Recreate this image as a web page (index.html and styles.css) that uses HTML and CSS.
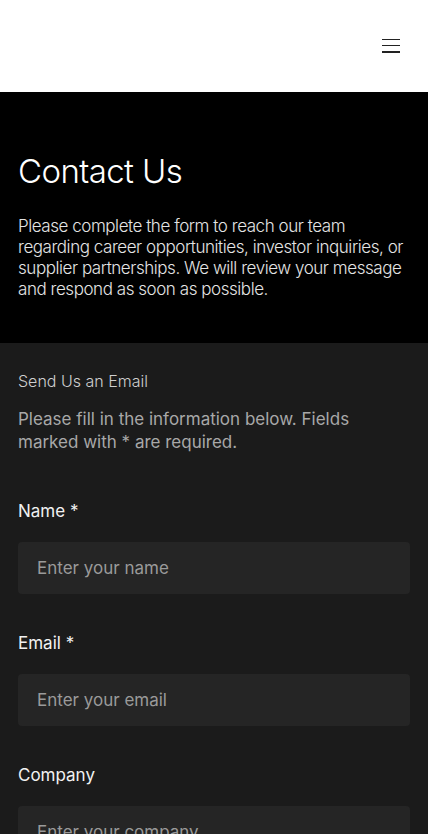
FILE: index.html
```html
<!DOCTYPE html>
<html lang="en">
<head>
    <meta charset="UTF-8">
    <meta name="viewport" content="width=device-width, initial-scale=1.0">
    <title>Contact Us</title>
    <link rel="stylesheet" href="styles.css">
</head>
<body>

    <div class="topbar">
        <button class="menu-btn" aria-label="Menu">
            <span></span>
            <span></span>
            <span></span>
        </button>
    </div>

    <div class="hero">
        <h1>Contact Us</h1>
        <p>Please complete the form to reach our team regarding career opportunities, investor inquiries, or supplier partnerships. We will review your message and respond as soon as possible.</p>
    </div>

    <div class="form-section">
        <h2>Send Us an Email</h2>
        <p class="intro">Please fill in the information below. Fields marked with * are required.</p>

        <form class="contact-form">
            <div class="field">
                <label for="name">Name *</label>
                <input type="text" id="name" placeholder="Enter your name">
            </div>
            <div class="field">
                <label for="email">Email *</label>
                <input type="email" id="email" placeholder="Enter your email">
            </div>
            <div class="field">
                <label for="company">Company</label>
                <input type="text" id="company" placeholder="Enter your company">
            </div>
        </form>
    </div>

</body>
</html>
```

FILE: styles.css
```css
body {
    font-family: Inter, "Noto Sans", sans-serif;
    margin: 0;
    padding: 0;
    background-color: #1b1b1b;
}

.topbar {
    height: 92px;
    background-color: #fff;
    display: flex;
    justify-content: flex-end;
    align-items: center;
    padding: 0 28px;
    box-sizing: border-box;
}

.menu-btn {
    width: 18px;
    height: 14px;
    padding: 0;
    border: none;
    background: none;
    display: flex;
    flex-direction: column;
    justify-content: space-between;
    margin-top: -1px;
}

.menu-btn span {
    display: block;
    height: 1.5px;
    background-color: #222;
}

.hero {
    background-color: #000;
    color: #fff;
    padding: 56px 18px 43px;
}

.hero h1 {
    font-size: 33px;
    font-weight: 300;
    line-height: 46px;
    margin: 0 0 22px;
    letter-spacing: -0.6px;
}

.hero p {
    font-size: 17px;
    font-weight: 300;
    line-height: 21px;
    color: #e4e4e4;
    margin: 0;
    letter-spacing: -0.45px;
}

.form-section {
    padding: 27px 18px 40px;
}

.form-section h2 {
    font-size: 16px;
    font-weight: 300;
    line-height: 22px;
    color: #cfcfcf;
    margin: 0 0 16px;
}

.intro {
    font-size: 17px;
    line-height: 23px;
    color: #a8a8a8;
    margin: 0 0 45px;
}

.field {
    margin-bottom: 37px;
}

.field label {
    display: block;
    font-size: 17px;
    line-height: 24px;
    color: #f2f2f2;
    margin-bottom: 19px;
}

.field input {
    display: block;
    width: 100%;
    height: 52px;
    box-sizing: border-box;
    border: none;
    border-radius: 4px;
    background-color: #252525;
    padding: 0 19px;
    font-family: Inter, "Noto Sans", sans-serif;
    font-size: 17px;
    color: #fff;
    outline: none;
}

.field input::placeholder {
    color: #9a9a9a;
}
```
